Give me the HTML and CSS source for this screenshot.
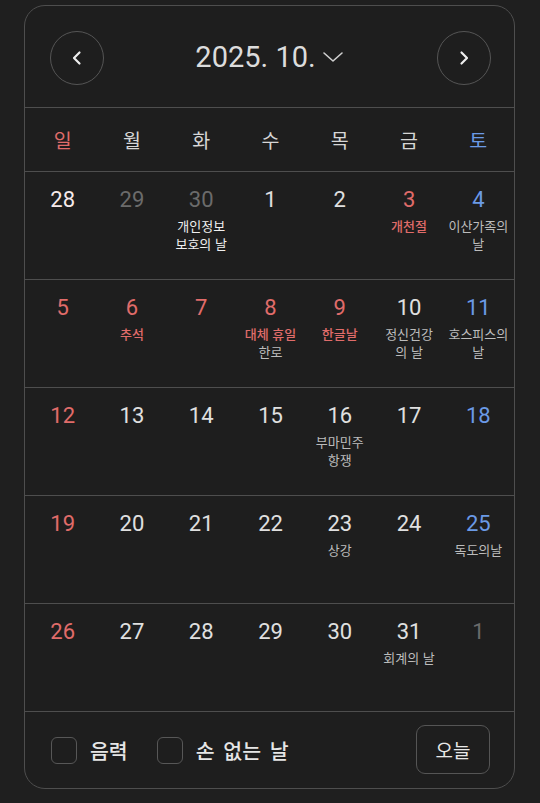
FILE: index.html
```html
<!DOCTYPE html>
<html lang="ko">
<head>
<meta charset="utf-8">
<link rel="stylesheet" href="styles.css">
</head>
<body>
<div class="card">
  <div class="header">
    <button class="nav">
      <svg width="14" height="16" viewBox="0 0 14 16"><path d="M9.5 2.5 L4 8 L9.5 13.5" fill="none" stroke="#eeeeee" stroke-width="2.2" stroke-linecap="round" stroke-linejoin="round"/></svg>
    </button>
    <div class="title">
      <span>2025. 10.</span>
      <svg width="22" height="12" viewBox="0 0 22 12"><path d="M2 2 L11 10 L20 2" fill="none" stroke="#cfcfcf" stroke-width="1.6" stroke-linecap="round" stroke-linejoin="round"/></svg>
    </div>
    <button class="nav">
      <svg width="14" height="16" viewBox="0 0 14 16"><path d="M4.5 2.5 L10 8 L4.5 13.5" fill="none" stroke="#eeeeee" stroke-width="2.2" stroke-linecap="round" stroke-linejoin="round"/></svg>
    </button>
  </div>

  <div class="weekdays">
    <div class="wd sun">일</div>
    <div class="wd">월</div>
    <div class="wd">화</div>
    <div class="wd">수</div>
    <div class="wd">목</div>
    <div class="wd">금</div>
    <div class="wd sat">토</div>
  </div>

  <div class="week">
    <div class="day"><div class="num prev-sun">28</div></div>
    <div class="day"><div class="num dim">29</div></div>
    <div class="day"><div class="num dim">30</div><div class="ev bright">개인정보<br>보호의 날</div></div>
    <div class="day"><div class="num">1</div></div>
    <div class="day"><div class="num">2</div></div>
    <div class="day"><div class="num red">3</div><div class="ev hol">개천절</div></div>
    <div class="day"><div class="num blue">4</div><div class="ev">이산가족의<br>날</div></div>
  </div>

  <div class="week">
    <div class="day"><div class="num red">5</div></div>
    <div class="day"><div class="num red">6</div><div class="ev hol">추석</div></div>
    <div class="day"><div class="num red">7</div></div>
    <div class="day"><div class="num red">8</div><div class="ev"><span class="hol">대체 휴일</span><br>한로</div></div>
    <div class="day"><div class="num red">9</div><div class="ev hol">한글날</div></div>
    <div class="day"><div class="num">10</div><div class="ev">정신건강<br>의 날</div></div>
    <div class="day"><div class="num blue">11</div><div class="ev">호스피스의<br>날</div></div>
  </div>

  <div class="week">
    <div class="day"><div class="num red">12</div></div>
    <div class="day"><div class="num">13</div></div>
    <div class="day"><div class="num">14</div></div>
    <div class="day"><div class="num">15</div></div>
    <div class="day"><div class="num">16</div><div class="ev">부마민주<br>항쟁</div></div>
    <div class="day"><div class="num">17</div></div>
    <div class="day"><div class="num blue">18</div></div>
  </div>

  <div class="week">
    <div class="day"><div class="num red">19</div></div>
    <div class="day"><div class="num">20</div></div>
    <div class="day"><div class="num">21</div></div>
    <div class="day"><div class="num">22</div></div>
    <div class="day"><div class="num">23</div><div class="ev">상강</div></div>
    <div class="day"><div class="num">24</div></div>
    <div class="day"><div class="num blue">25</div><div class="ev">독도의날</div></div>
  </div>

  <div class="week">
    <div class="day"><div class="num red">26</div></div>
    <div class="day"><div class="num">27</div></div>
    <div class="day"><div class="num">28</div></div>
    <div class="day"><div class="num">29</div></div>
    <div class="day"><div class="num">30</div></div>
    <div class="day"><div class="num">31</div><div class="ev">회계의 날</div></div>
    <div class="day"><div class="num dim">1</div></div>
  </div>

  <div class="footer">
    <label class="check"><span class="box"></span><span class="label">음력</span></label>
    <label class="check"><span class="box"></span><span class="label">손 없는 날</span></label>
    <button class="today">오늘</button>
  </div>
</div>
</body>
</html>
```

FILE: styles.css
```css
* { box-sizing: border-box; }

html, body {
  margin: 0;
  padding: 0;
  background: #1f1f1f;
}

body {
  font-family: Roboto, "Noto Sans CJK KR", sans-serif;
  color: #e2e2e2;
  padding: 5px 0 0 24px;
}

.card {
  width: 491px;
  height: 784px;
  border: 1.5px solid #4e4e4e;
  border-radius: 21px;
  background: #1e1e1e;
  display: flex;
  flex-direction: column;
  overflow: hidden;
}

.header {
  height: 102px;
  flex: none;
  border-bottom: 1.5px solid #4e4e4e;
  display: flex;
  align-items: center;
  justify-content: space-between;
  padding: 0 23px 0 25px;
}

.nav {
  width: 54px;
  height: 54px;
  border-radius: 50%;
  border: 1.5px solid #555555;
  background: transparent;
  display: flex;
  align-items: center;
  justify-content: center;
  padding: 0;
  margin-top: 2px;
}

.title {
  display: flex;
  align-items: center;
  gap: 6px;
  font-size: 29px;
  color: #dcdcdc;
  margin-right: 2px;
}

.title span { line-height: 34px; }
.title svg { margin-top: 1px; }

.weekdays {
  height: 64px;
  flex: none;
  border-bottom: 1.5px solid #4e4e4e;
  display: grid;
  grid-template-columns: repeat(7, 1fr);
  align-items: center;
  padding: 0 1px 0 3px;
}

.wd {
  text-align: center;
  font-family: "Noto Sans CJK KR", sans-serif;
  font-size: 19.5px;
  color: #d6d6d6;
  line-height: 24px;
  margin-top: 1px;
}

.wd.sun { color: #e06c6a; }
.wd.sat { color: #6b9ae6; }

.week {
  height: 108px;
  flex: none;
  border-bottom: 1.5px solid #4e4e4e;
  display: grid;
  grid-template-columns: repeat(7, 1fr);
  padding: 15px 1px 0 3px;
}

.day {
  display: flex;
  flex-direction: column;
  align-items: center;
}

.num {
  font-size: 22px;
  line-height: 26px;
  color: #e0e0e0;
  margin-bottom: 4px;
}

.num.red { color: #e06c6a; }
.num.blue { color: #6b9ae6; }
.num.dim { color: #6b6b6b; }
.num.prev-sun { color: #f6eaea; }

.ev {
  font-family: "Noto Sans CJK KR", sans-serif;
  font-size: 13px;
  line-height: 18px;
  color: #bcbcbc;
  white-space: nowrap;
  text-align: center;
}

.ev.bright { color: #f0f0f0; }
.ev.hol, .ev .hol { color: #e06c6a; font-weight: 500; }

.footer {
  flex: 1;
  display: flex;
  align-items: center;
  padding: 0 24px 0 26px;
}

.check {
  display: flex;
  align-items: center;
  margin-right: 29px;
}

.box {
  width: 26px;
  height: 27px;
  border: 1.5px solid #575757;
  border-radius: 6px;
  margin-right: 13px;
}

.label {
  font-family: "Noto Sans CJK KR", sans-serif;
  font-size: 20.5px;
  font-weight: 500;
  color: #e6e6e6;
  line-height: 26px;
  word-spacing: 3px;
}

.today {
  margin-left: auto;
  width: 74px;
  height: 49px;
  border: 1.5px solid #555555;
  border-radius: 9px;
  background: transparent;
  font-family: "Noto Sans CJK KR", sans-serif;
  font-size: 19px;
  color: #e8e8e8;
  padding: 0;
  margin-top: -2px;
}
```
